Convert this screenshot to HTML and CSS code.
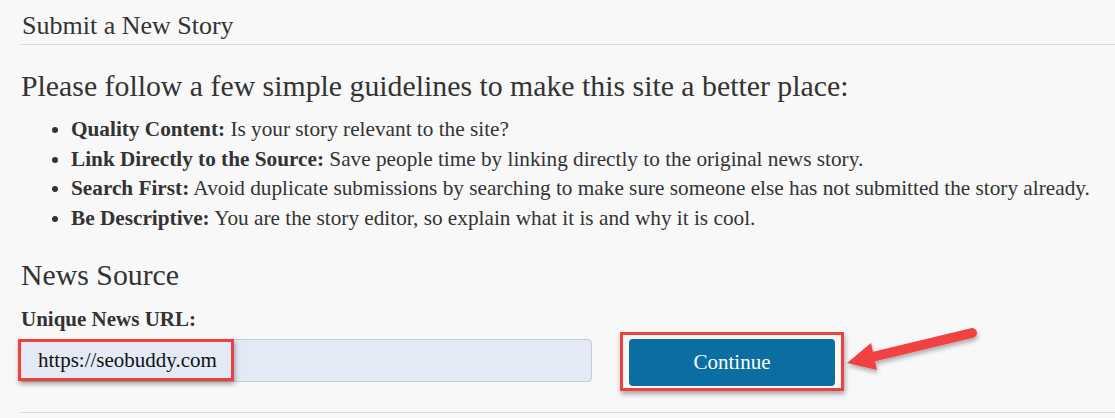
FILE: index.html
```html
<!DOCTYPE html>
<html>
<head>
<meta charset="utf-8">
<link rel="stylesheet" href="styles.css">
</head>
<body>
<div class="page">
  <h2 class="title">Submit a New Story</h2>
  <h3 class="guide">Please follow a few simple guidelines to make this site a better place:</h3>
  <ul class="rules">
    <li><b>Quality Content:</b> Is your story relevant to the site?</li>
    <li><b>Link Directly to the Source:</b> Save people time by linking directly to the original news story.</li>
    <li><b>Search First:</b> Avoid duplicate submissions by searching to make sure someone else has not submitted the story already.</li>
    <li><b>Be Descriptive:</b> You are the story editor, so explain what it is and why it is cool.</li>
  </ul>
  <h3 class="section">News Source</h3>
  <div class="label">Unique News URL:</div>
  <div class="row">
    <div class="field"><span class="mark">https://seobuddy.com</span></div>
    <div class="btnmark"><div class="btn">Continue</div></div>
  </div>
  <div class="bottom"></div>
</div>
<svg class="arrow" width="200" height="80" viewBox="0 0 200 80">
  <defs>
    <filter id="sh" x="-20%" y="-30%" width="140%" height="180%">
      <feDropShadow dx="1" dy="3" stdDeviation="2" flood-color="#000" flood-opacity="0.3"/>
    </filter>
  </defs>
  <g filter="url(#sh)" fill="#f04343">
    <path d="M142 13 L38 38" stroke="#f04343" stroke-width="10" stroke-linecap="round"/>
    <path d="M17 43 L41 23 L47 50 Z"/>
  </g>
</svg>
</body>
</html>
```
FILE: styles.css
```css
html, body { margin: 0; padding: 0; }
body {
  background: #f8f8f8;
  font-family: "Liberation Serif", "Times New Roman", serif;
  color: #333;
  width: 1115px;
  height: 418px;
  overflow: hidden;
  position: relative;
}
.page { padding-left: 21px; }
.title {
  margin: 0;
  font-weight: normal;
  font-size: 26px;
  line-height: 28px;
  padding-top: 12px;
  padding-left: 1px;
  padding-bottom: 4px;
  border-bottom: 1px solid #dcdcdc;
}
.guide {
  margin: 24px 0 0 0;
  font-weight: normal;
  font-size: 29.8px;
  line-height: 34px;
}
.rules {
  margin: 12px 0 0 0;
  padding-left: 50px;
  font-size: 21.25px;
  line-height: 29.5px;
}
.rules b { font-weight: bold; }
.section {
  margin: 25px 0 0 0;
  font-weight: normal;
  font-size: 29.8px;
  line-height: 34px;
}
.label {
  margin-top: 15px;
  font-weight: bold;
  font-size: 21px;
  line-height: 24px;
}
.row {
  display: flex;
  align-items: flex-start;
  margin-top: 8px;
  margin-left: -3px;
}
.field {
  width: 572px;
  height: 41px;
  background: #e3eaf6;
  border: 1px solid #c8ccd4;
  border-radius: 4px;
  display: flex;
  align-items: stretch;
}
.mark {
  display: flex;
  align-items: center;
  box-sizing: border-box;
  width: 216px;
  height: 42px;
  margin: -1px 0 0 -1px;
  border: 3px solid #ef4040;
  padding-left: 17px;
  font-size: 21px;
  color: #111;
  box-shadow: 1px 3px 5px rgba(0,0,0,0.35);
}
.btnmark {
  margin-left: 28px;
  margin-top: -7px;
  border: 3px solid #ef4040;
  padding: 4px 6px 2px 6px;
  box-shadow: 1px 3px 5px rgba(0,0,0,0.35);
}
.btn {
  width: 206px;
  height: 47px;
  background: #0b6ea3;
  border-radius: 4px;
  color: #fff;
  font-size: 21px;
  display: flex;
  align-items: center;
  justify-content: center;
}
.bottom {
  margin-top: 21px;
  border-top: 1px solid #dcdcdc;
}
.arrow {
  position: absolute;
  left: 830px;
  top: 320px;
}
```
